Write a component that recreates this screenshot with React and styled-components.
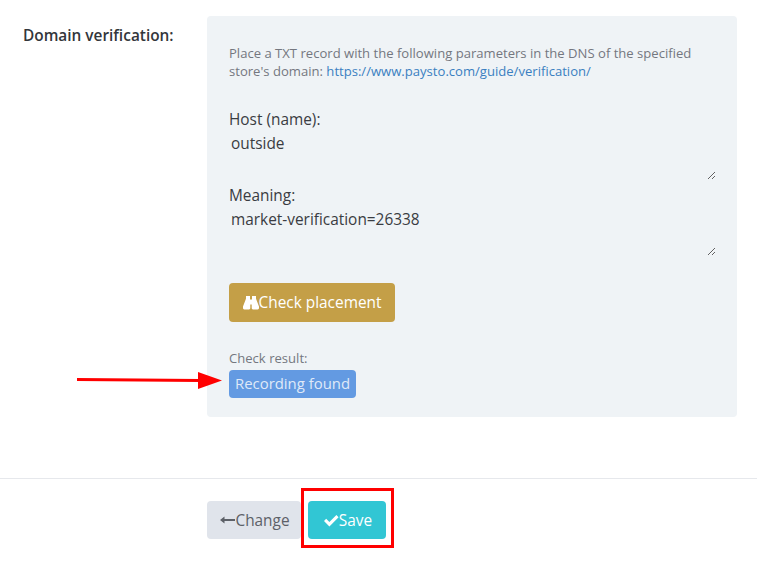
import React from "react";
import styled, { createGlobalStyle } from "styled-components";

const Global = createGlobalStyle`
  html, body { margin: 0; padding: 0; background: #fff; }
  body { font-family: "Open Sans", "Noto Sans", sans-serif; color: #33353a; overflow: hidden; }
`;

const Page = styled.div`
  position: relative;
  width: 757px;
  height: 562px;
  overflow: hidden;
`;

const FormRow = styled.div`
  display: flex;
  padding: 16px 20px 0 23px;
  height: 478px;
  box-sizing: border-box;
`;

const Label = styled.div`
  width: 184px;
  flex: none;
  font-size: 15.4px;
  font-weight: 600;
  line-height: 20px;
  padding-top: 10px;
  color: #33363b;
`;

const Panel = styled.div`
  width: 530px;
  height: 401px;
  box-sizing: border-box;
  background: #eff3f6;
  border-radius: 4px;
  padding: 28px 22px 0;
`;

const Hint = styled.p`
  margin: 0;
  font-size: 13.09px;
  line-height: 18px;
  color: #74777f;
`;

const Link = styled.a`
  color: #3a7fc1;
  text-decoration: none;
`;

const Field = styled.div`
  display: flex;
  flex-direction: column;
  margin-top: ${(p) => p.$top}px;
`;

const FieldLabel = styled.label`
  font-size: 15.4px;
  line-height: 20px;
  margin-bottom: 4px;
  color: #3a3c42;
`;

const Area = styled.textarea`
  display: block;
  width: 487px;
  height: 46px;
  box-sizing: border-box;
  margin: 0;
  padding: 0 2px;
  border: 0;
  outline: 0;
  background: transparent;
  font-family: "Open Sans", "Noto Sans", sans-serif;
  font-size: 15.4px;
  line-height: 20px;
  color: #3a3c42;
`;

const Button = styled.button`
  display: inline-flex;
  align-items: center;
  justify-content: center;
  box-sizing: border-box;
  border: 0;
  border-radius: 4px;
  height: ${(p) => p.$h}px;
  width: ${(p) => p.$w}px;
  padding: 0 0 0 ${(p) => p.$nudge || 0}px;
  font-family: "Open Sans", "Noto Sans", sans-serif;
  font-size: 15.4px;
  background: ${(p) => p.$bg};
  color: ${(p) => p.$fg};
`;

const CheckBlock = styled.div`
  margin-top: 27px;
`;

const CheckWrap = styled.div`
  margin-top: 27px;
`;

const ResultLabel = styled.div`
  font-size: 13.09px;
  line-height: 18px;
  color: #74777f;
`;

const Badge = styled.span`
  display: inline-block;
  width: 127px;
  height: 28px;
  line-height: 26px;
  text-align: center;
  margin-top: 3px;
  background: #639ae2;
  border-radius: 4px;
  color: #dfe9f8;
  font-size: 14.9px;
`;

const Footer = styled.div`
  border-top: 1px solid #e6e8ec;
  padding: 22px 0 0 207px;
  display: flex;
  gap: 7px;
`;

const Arrow = styled.svg`
  position: absolute;
  left: 76px;
  top: 369px;
`;

const Highlight = styled.div`
  position: absolute;
  left: 301px;
  top: 488px;
  width: 93px;
  height: 60px;
  box-sizing: border-box;
  border: 3px solid #ff0000;
`;

const Binoculars = () => (
  <svg width="16" height="14" viewBox="0 0 16 14" fill="currentColor">
    <path d="M3 0h4v3.5h2V0h4v2.5l.4 1.2L16 10.5V12c0 .8-.5 1.4-1.3 1.4H10c-.8 0-1.3-.6-1.3-1.4V8.6H7.3V12c0 .8-.5 1.4-1.3 1.4H1.3C.5 13.4 0 12.8 0 12v-1.5l2.6-6.8L3 2.5z" />
  </svg>
);

const LongLeft = () => (
  <svg width="15" height="10" viewBox="0 0 15 10" fill="currentColor">
    <path d="M0 5 L4.5 1.5 V4 H15 V6 H4.5 V8.5 Z" />
  </svg>
);

const Check = () => (
  <svg width="15" height="13" viewBox="0 0 15 13" fill="currentColor">
    <path d="M0 7 L2.2 4.8 L5.4 8 L12.4 1 L14.6 3.2 L5.4 12.4 Z" />
  </svg>
);

export default function App() {
  return (
    <Page>
      <Global />
      <FormRow>
        <Label>Domain verification:</Label>
        <Panel>
          <Hint>
            Place a TXT record with the following parameters in the DNS of the specified store's domain:{" "}
            <Link href="#">https://www.paysto.com/guide/verification/</Link>
          </Hint>
          <Field $top={30}>
            <FieldLabel>Host (name):</FieldLabel>
            <Area defaultValue="outside" />
          </Field>
          <Field $top={6}>
            <FieldLabel>Meaning:</FieldLabel>
            <Area defaultValue="market-verification=26338" />
          </Field>
          <CheckBlock>
            <Button $w={166} $h={39} $bg="#c49f47" $fg="#fff">
              <Binoculars />
              Check placement
            </Button>
          </CheckBlock>
          <CheckWrap>
            <ResultLabel>Check result:</ResultLabel>
            <Badge>Recording found</Badge>
          </CheckWrap>
        </Panel>
      </FormRow>
      <Footer>
        <Button $w={94} $h={38} $nudge={2} $bg="#e0e4eb" $fg="#5d6168">
          <LongLeft />
          Change
        </Button>
        <Button $w={78} $h={38} $nudge={2} $bg="#31c6d4" $fg="#fff">
          <Check />
          Save
        </Button>
      </Footer>
      <Arrow width="146" height="22" viewBox="0 0 146 22">
        <path d="M1 10.5 L124 11.5" stroke="#ff0000" strokeWidth="3" />
        <path d="M122 3 L146 11.5 L122 20 Z" fill="#ff0000" />
      </Arrow>
      <Highlight />
    </Page>
  );
}
